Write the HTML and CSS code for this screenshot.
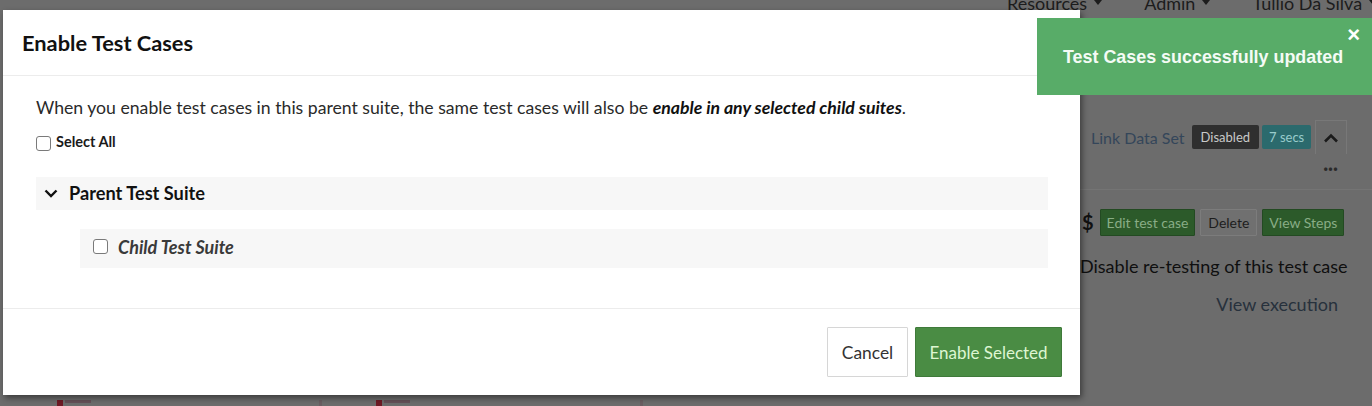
FILE: index.html
```html
<!DOCTYPE html>
<html lang="en">
<head>
<meta charset="utf-8">
<title>Enable Test Cases</title>
<link rel="stylesheet" href="styles.css">
</head>
<body>
<div class="page">
  <nav class="topnav">
    <span class="nav-item">Resources <span class="caret"></span></span>
    <span class="nav-item">Admin <span class="caret"></span></span>
    <span class="nav-item">Tullio Da Silva <span class="caret"></span></span>
  </nav>
  <aside class="side">
    <div class="side-row1">
      <span class="link">Link Data Set</span>
      <span class="badge badge-dark">Disabled</span>
      <span class="badge badge-teal">7 secs</span>
      <span class="chev-btn">
        <svg width="16" height="10" viewBox="0 0 16 10"><path d="M2 8.5 L8 2.5 L14 8.5" fill="none" stroke="#1a1a1a" stroke-width="2.6"/></svg>
      </span>
    </div>
    <div class="dots">&middot;&middot;&middot;</div>
    <div class="side-row2">
      <span class="dollar">$</span>
      <span class="sbtn sbtn-green">Edit test case</span>
      <span class="sbtn sbtn-plain">Delete</span>
      <span class="sbtn sbtn-green">View Steps</span>
    </div>
    <div class="retest">Disable re-testing of this test case</div>
    <div class="view-exec">View execution</div>
  </aside>
  <div class="bottom-marks">
    <span class="mark"><i></i><b></b></span>
    <span class="mark mark-b"><i></i></span>
    <span class="mark mark-c"><i></i><b></b></span>
    <span class="mark mark-d"><i></i></span>
  </div>
</div>

<div class="modal">
  <div class="modal-header">
    <h2 class="modal-title">Enable Test Cases</h2>
  </div>
  <div class="modal-body">
    <p class="intro">When you enable test cases in this parent suite, the same test cases will also be <em>enable in any selected child suites</em>.</p>
    <label class="select-all"><span class="cb"></span>Select All</label>
    <div class="tree">
      <div class="parent-row">
        <svg class="chevron" width="14" height="9" viewBox="0 0 14 9"><path d="M1.5 1.5 L7 7 L12.5 1.5" fill="none" stroke="#111" stroke-width="2.4"/></svg>
        <span class="parent-name">Parent Test Suite</span>
      </div>
      <div class="child-row">
        <span class="cb"></span>
        <span class="child-name">Child Test Suite</span>
      </div>
    </div>
  </div>
  <div class="modal-footer">
    <button class="btn btn-default">Cancel</button>
    <button class="btn btn-success">Enable Selected</button>
  </div>
</div>

<div class="toast">
  <span class="toast-close">&times;</span>
  <span class="toast-msg">Test Cases successfully updated</span>
</div>
</body>
</html>
```

FILE: styles.css
```css
* { box-sizing: border-box; }

html, body {
  margin: 0;
  padding: 0;
}

body {
  width: 1372px;
  height: 406px;
  overflow: hidden;
  background: #6c6c6c;
  font-family: Lato, "Noto Sans", sans-serif;
  position: relative;
}

/* ---------- dimmed background page ---------- */
.page {
  width: 1372px;
  height: 406px;
  overflow: hidden;
  display: flex;
  flex-direction: column;
}

.topnav {
  display: flex;
  gap: 42px;
  margin-top: -8px;
  padding-left: 1007px;
  white-space: nowrap;
  font-size: 18px;
  color: #1c1c1c;
  height: 21px;
}

.nav-item {
  display: inline-flex;
  align-items: center;
  gap: 7px;
}

.caret {
  width: 0;
  height: 0;
  border-left: 4px solid transparent;
  border-right: 4px solid transparent;
  border-top: 5px solid #1c1c1c;
}

.side {
  margin-left: 1080px;
  width: 292px;
  display: flex;
  flex-direction: column;
  padding-top: 107px;
}

.side-row1 {
  display: flex;
  align-items: center;
  padding-left: 11px;
  height: 34px;
}

.link {
  font-size: 16px;
  color: #34465a;
  margin-right: 7px;
}

.badge {
  font-size: 13px;
  color: #c9c9c9;
  height: 24px;
  line-height: 24px;
  padding: 0 9px;
  border-radius: 2px;
  margin-right: 3px;
}

.badge-dark { background: #2f2f2f; }
.badge-teal { background: #2b6a6d; color: #9cc; padding: 0 7px; }

.chev-btn {
  display: flex;
  align-items: center;
  justify-content: center;
  width: 32px;
  height: 34px;
  border: 1px solid #787878;
  border-bottom: none;
  margin-left: 1px;
}

.dots {
  font-size: 18px;
  line-height: 18px;
  color: #2a2a2a;
  text-align: right;
  padding-right: 34px;
  font-weight: bold;
  height: 36px;
  padding-top: 5px;
  border-bottom: 1px solid #747474;
}

.side-row2 {
  display: flex;
  align-items: center;
  gap: 5px;
  margin-top: 18px;
  padding-left: 2px;
  height: 28px;
}

.dollar {
  font-size: 20px;
  font-weight: bold;
  color: #111;
  margin-right: 1px;
}

.sbtn {
  font-size: 14px;
  height: 27px;
  line-height: 25px;
  padding: 0 6px;
  border-radius: 1px;
}

.sbtn-green {
  background: #2c5a2a;
  color: #89ad86;
  border: 1px solid #234a22;
}

.sbtn-plain {
  background: #707070;
  color: #1d1d1d;
  border: 1px solid #7c7c7c;
  padding: 0 7px;
}

.retest {
  margin-top: 19px;
  font-size: 18px;
  line-height: 22px;
  color: #0f0f0f;
  white-space: nowrap;
}

.view-exec {
  margin-top: 16px;
  font-size: 18px;
  line-height: 22px;
  color: #27313c;
  text-align: right;
  padding-right: 34px;
}

.bottom-marks {
  margin-top: auto;
  height: 8px;
  display: flex;
  align-items: flex-end;
}

.mark {
  display: flex;
  gap: 2px;
  margin-left: 57px;
}

.mark i {
  width: 6px;
  height: 6px;
  background: #6e1a25;
  display: block;
}

.mark b {
  width: 26px;
  height: 3px;
  background: #665058;
  display: block;
}

.mark-b { margin-left: 228px; }
.mark-b i { background: #6a5e62; width: 3px; }
.mark-c { margin-left: 54px; }
.mark-d { margin-left: 230px; }
.mark-d i { background: #6a5e62; width: 3px; }

/* ---------- modal ---------- */
.modal {
  position: absolute;
  left: 3px;
  top: 10px;
  width: 1077px;
  height: 385px;
  background: #ffffff;
  box-shadow: 2px 3px 6px rgba(0, 0, 0, 0.45);
  display: flex;
  flex-direction: column;
}

.modal-header {
  height: 66px;
  border-bottom: 1px solid #ececec;
  display: flex;
  align-items: center;
  padding-left: 19px;
}

.modal-title {
  margin: 0;
  font-size: 21.8px;
  font-weight: bold;
  color: #111;
  padding-bottom: 1px;
}

.modal-body {
  padding: 20px 32px 0 33px;
  flex: 1;
  border-bottom: 1px solid #ececec;
}

.intro {
  margin: 0;
  font-size: 17.65px;
  color: #2a2a2a;
  line-height: 24px;
}

.intro em {
  font-weight: bold;
  font-style: italic;
  color: #111;
}

.select-all {
  display: flex;
  align-items: center;
  gap: 5px;
  margin-top: 12px;
  font-size: 14.5px;
  line-height: 18px;
  font-weight: bold;
  color: #1a1a1a;
}

.cb {
  display: inline-block;
  width: 15px;
  height: 15px;
  border: 1.5px solid #7a7a7a;
  border-radius: 3px;
  background: #fff;
}

.select-all .cb { margin-top: 4px; }

.tree {
  margin-top: 26px;
  display: flex;
  flex-direction: column;
  gap: 19px;
}

.parent-row {
  height: 33px;
  background: #f7f7f7;
  display: flex;
  align-items: center;
  padding-left: 8px;
  padding-bottom: 2px;
  gap: 11px;
}

.parent-row .chevron { margin-top: 1px; }

.parent-name {
  font-size: 18.2px;
  font-weight: bold;
  color: #111;
}

.child-row {
  margin-left: 44px;
  height: 39px;
  background: #f7f7f7;
  display: flex;
  align-items: center;
  padding-left: 13px;
  padding-bottom: 4px;
  gap: 10px;
}

.child-name {
  font-size: 18px;
  font-weight: bold;
  font-style: italic;
  color: #3a3a3a;
}

.modal-footer {
  height: 86px;
  display: flex;
  justify-content: flex-end;
  align-items: flex-start;
  gap: 7px;
  padding: 18px 18px 0 0;
}

.btn {
  height: 50px;
  font-family: Lato, "Noto Sans", sans-serif;
  font-size: 17px;
  border-radius: 1px;
  cursor: pointer;
}

.btn-default {
  width: 81px;
  background: #fff;
  border: 1px solid #d6d6d6;
  color: #333;
  font-size: 17.4px;
}

.btn-success {
  width: 147px;
  background: #4a8c44;
  border: 1px solid #3f7a3a;
  color: #def6d2;
}

/* ---------- toast ---------- */
.toast {
  position: absolute;
  left: 1037px;
  top: 18px;
  width: 335px;
  height: 77px;
  background: #58ac68;
  display: flex;
  align-items: center;
  padding-left: 26px;
  padding-top: 2px;
}

.toast-msg {
  font-family: "Liberation Sans", Arial, sans-serif;
  font-weight: bold;
  font-size: 17.9px;
  color: #f4fbf5;
}

.toast-close {
  position: absolute;
  right: 12px;
  top: 6px;
  font-family: "Liberation Sans", Arial, sans-serif;
  font-weight: bold;
  font-size: 22px;
  color: #fff;
  line-height: 22px;
}
```
